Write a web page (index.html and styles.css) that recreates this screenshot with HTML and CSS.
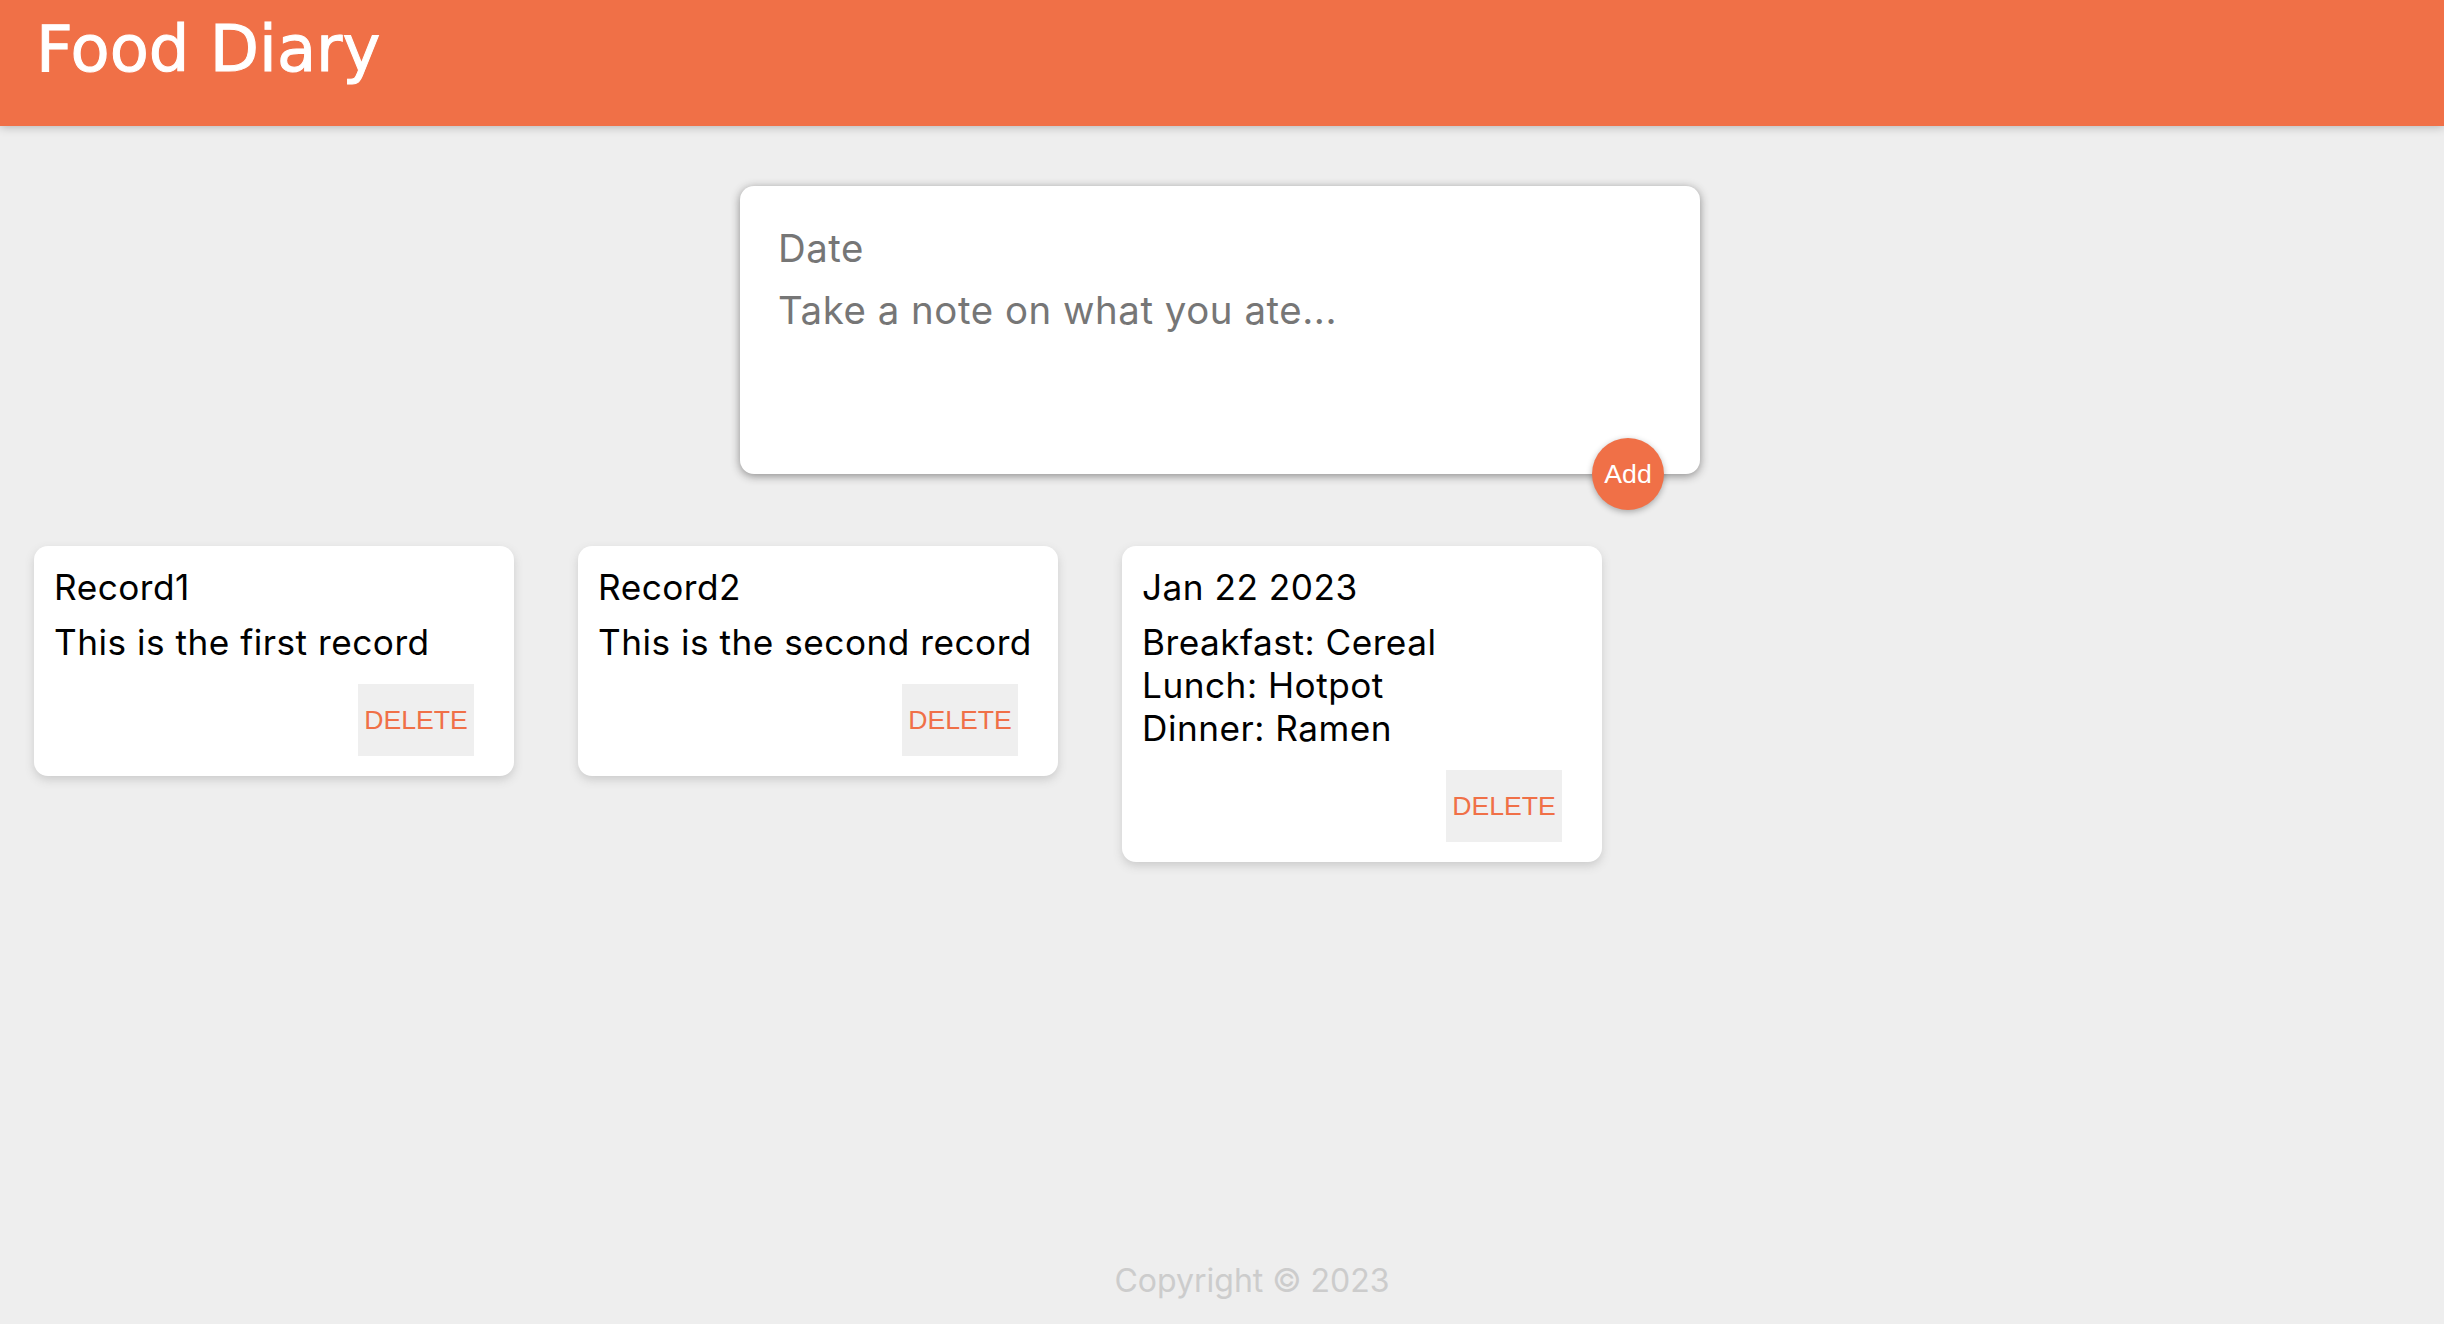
FILE: index.html
```html
<!DOCTYPE html>
<html lang="en">
<head>
<meta charset="utf-8">
<title>Food Diary</title>
<link rel="stylesheet" href="styles.css">
</head>
<body class="page">
  <header class="app-header">
    <h1 class="app-title">Food Diary</h1>
  </header>

  <form class="create-note">
    <input class="create-input" name="title" placeholder="Date">
    <textarea class="create-text" name="content" placeholder="Take a note on what you ate..."></textarea>
    <button class="add-btn" type="button">Add</button>
  </form>

  <main class="notes">
    <div class="note">
      <h1 class="note-title">Record1</h1>
      <p class="note-body">This is the first record</p>
      <button class="delete-btn" type="button">DELETE</button>
    </div>
    <div class="note">
      <h1 class="note-title">Record2</h1>
      <p class="note-body">This is the second record</p>
      <button class="delete-btn" type="button">DELETE</button>
    </div>
    <div class="note">
      <h1 class="note-title">Jan 22 2023</h1>
      <p class="note-body">Breakfast: Cereal
Lunch: Hotpot
Dinner: Ramen</p>
      <button class="delete-btn" type="button">DELETE</button>
    </div>
  </main>

  <footer class="app-footer">
    <p class="copyright">Copyright © 2023</p>
  </footer>
</body>
</html>
```
FILE: styles.css
```css
* { box-sizing: border-box; }

html, body { margin: 0; padding: 0; }

.page {
  background: #eeeeee;
  font-family: "Inter", "Liberation Sans", sans-serif;
  min-height: 100vh;
  display: flex;
  flex-direction: column;
}

.app-header {
  height: 126px;
  background: #f07047;
  padding: 17px 36px 0;
  box-shadow: 0 0 10px 0 rgba(0, 0, 0, 0.3);
  position: relative;
  z-index: 1;
}

.app-title {
  margin: 0;
  color: #ffffff;
  font-family: "DejaVu Sans", sans-serif;
  font-weight: 400;
  font-size: 64px;
  line-height: 64px;
  -webkit-text-stroke: 1px #ffffff;
}

.create-note {
  position: relative;
  width: 960px;
  margin: 60px 0 0 calc(50% - 482px);
  padding: 30px;
  background: #ffffff;
  border-radius: 14px;
  box-shadow: 0 2px 10px rgb(138, 137, 137);
}

.create-input,
.create-text {
  display: block;
  width: 100%;
  border: none;
  outline: none;
  padding: 8px;
  font-family: "Inter", sans-serif;
  font-size: 38.4px;
  letter-spacing: 0.55px;
  line-height: 47px;
  color: #333;
  background: transparent;
  resize: none;
}

.create-input { height: 63px; }
.create-text { height: 165px; }

.create-input::placeholder,
.create-text::placeholder { color: #767676; opacity: 1; }

.add-btn {
  position: absolute;
  right: 36px;
  bottom: -36px;
  width: 72px;
  height: 72px;
  padding: 0;
  border: none;
  border-radius: 50%;
  background: #f07047;
  color: #ffffff;
  font-family: "Liberation Sans", Arial, sans-serif;
  font-size: 26.67px;
  box-shadow: 0 2px 6px rgba(0, 0, 0, 0.3);
}

.notes {
  display: flex;
  flex-wrap: wrap;
  align-items: flex-start;
  gap: 64px;
  margin-top: 72px;
  padding-left: 34px;
}

.note {
  width: 480px;
  padding: 20px;
  background: #ffffff;
  border-radius: 14px;
  box-shadow: 0 4px 10px #cccccc;
}

.note-title,
.note-body {
  font-family: "Inter", sans-serif;
  font-weight: 400;
  font-size: 35.2px;
  line-height: 43px;
  letter-spacing: 0.5px;
  color: #000000;
}

.note-title { margin: 0 0 12px; }

.note-body {
  margin: 0 0 20px;
  white-space: pre-line;
}

.delete-btn {
  display: block;
  margin: 0 20px 0 auto;
  width: 116px;
  height: 72px;
  padding: 0;
  border: none;
  background: #efefef;
  color: #f07047;
  font-family: "Liberation Sans", Arial, sans-serif;
  font-size: 26.67px;
}

.app-footer {
  margin-top: auto;
  padding: 0 0 23px 60px;
  text-align: center;
}

.copyright {
  margin: 0;
  font-family: "Inter", sans-serif;
  font-size: 32px;
  line-height: 40px;
  color: #cccccc;
}
```
